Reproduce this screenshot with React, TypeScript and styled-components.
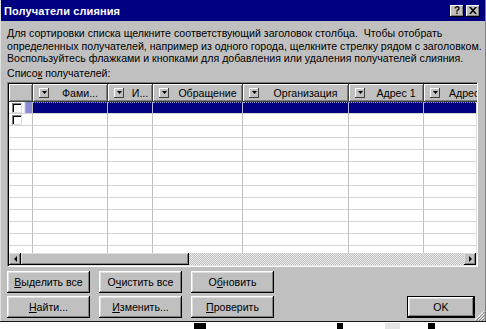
import React from "react";
import styled, { createGlobalStyle } from "styled-components";

const GlobalStyle = createGlobalStyle`
	html, body {
		margin: 0;
		padding: 0;
		background: #ffffff;
	}
	body {
		font-family: "Liberation Sans", Arial, sans-serif;
		font-size: 11px;
		color: #000;
	}
`;

const columns = [
	{ title: "", width: 24 },
	{ title: "Фами...", width: 75 },
	{ title: "И...", width: 45 },
	{ title: "Обращение", width: 90 },
	{ title: "Организация", width: 106 },
	{ title: "Адрес 1", width: 75 },
	{ title: "Адрес 2", width: 70 },
];

const gridTemplate = columns.map((c) => `${c.width}px`).join(" ");
const rowCount = 13;

export default function App() {
	return (
		<>
			<GlobalStyle />
			<Dialog>
				<TitleBar>
					<Title>Получатели слияния</Title>
					<TitleButton>?</TitleButton>
					<TitleButton>
						<svg width="8" height="7" viewBox="0 0 8 7">
							<path d="M0 0h2l2 2.2L6 0h2L5 3.5 8 7H6L4 4.8 2 7H0l3-3.5z" fill="#000" />
						</svg>
					</TitleButton>
				</TitleBar>
				<Body>
					<Description>
						Для сортировки списка щелкните соответствующий заголовок столбца.&nbsp; Чтобы отобрать
						<br />
						определенных получателей, например из одного города, щелкните стрелку рядом с заголовком.
						<br />
						Воспользуйтесь флажками и кнопками для добавления или удаления получателей слияния.
					</Description>
					<Label>
						Списо<u>к</u> получателей:
					</Label>
					<Grid>
						<HeaderRow>
							{columns.map((c, i) => (
								<HeaderCell key={i}>
									{i > 0 && (
										<DropButton>
											<svg width="5" height="3" viewBox="0 0 5 3">
												<path d="M0 0h5L2.5 3z" fill="#000" />
											</svg>
										</DropButton>
									)}
									<HeaderText>{c.title}</HeaderText>
								</HeaderCell>
							))}
						</HeaderRow>
						<Rows>
							{Array.from({ length: rowCount }).map((_, r) => (
								<Row key={r}>
									{columns.map((_, i) =>
										i === 0 ? (
											<SelectorCell key={i} $selected={r === 0}>
												{r < 2 && <Check />}
											</SelectorCell>
										) : (
											<Cell key={i} $selected={r === 0} />
										)
									)}
								</Row>
							))}
						</Rows>
						<ScrollBar>
							<ArrowButton>
								<svg width="3" height="6" viewBox="0 0 3 6">
									<path d="M3 0v6L0 3z" fill="#000" />
								</svg>
							</ArrowButton>
							<Thumb />
							<Track />
							<ArrowButton>
								<svg width="3" height="6" viewBox="0 0 3 6">
									<path d="M0 0v6l3-3z" fill="#000" />
								</svg>
							</ArrowButton>
						</ScrollBar>
					</Grid>
					<Footer>
						<ButtonGrid>
							<Button>
								<u>В</u>ыделить все
							</Button>
							<Button>
								О<u>ч</u>истить все
							</Button>
							<Button>
								О<u>б</u>новить
							</Button>
							<Button>
								<u>Н</u>айти...
							</Button>
							<Button>
								<u>И</u>зменить...
							</Button>
							<Button>
								<u>П</u>роверить
							</Button>
						</ButtonGrid>
						<Button $default>OK</Button>
					</Footer>
				</Body>
				<Grip>
					<svg width="11" height="11" viewBox="0 0 11 11">
						<path d="M10 1L1 10M10 4L4 10M10 7L7 10" stroke="#fff" strokeWidth="1" />
						<path d="M11 2L2 11M11 5L5 11M11 8L8 11" stroke="#808080" strokeWidth="1" />
					</svg>
				</Grip>
			</Dialog>
			<Strip>
				<Mark $left={194} $width={12} />
				<Mark $left={131} $width={6} />
				<Smudge $left={42} $width={15} />
				<Mark $left={28} $width={7} />
			</Strip>
		</>
	);
}

const Dialog = styled.div`
	position: relative;
	width: 486px;
	height: 321px;
	box-sizing: border-box;
	background: #c0c0c0;
	border-left: 1px solid #dfdfdf;
	border-right: 1px solid #808080;
	display: flex;
	flex-direction: column;
`;

const TitleBar = styled.div`
	height: 21px;
	background: #000080;
	display: flex;
	align-items: center;
	gap: 2px;
	padding: 0 5px 0 3px;
`;

const Title = styled.div`
	flex: 1;
	color: #fff;
	font-weight: bold;
	font-size: 11px;
	letter-spacing: 0.1px;
`;

const TitleButton = styled.div`
	width: 14px;
	height: 12px;
	box-sizing: border-box;
	background: #c0c0c0;
	box-shadow: inset -1px -1px #000, inset 1px 1px #fff, inset -2px -2px #808080;
	display: flex;
	align-items: center;
	justify-content: center;
	font-weight: bold;
	font-size: 10px;
	line-height: 1;
`;

const Body = styled.div`
	flex: 1;
	display: flex;
	flex-direction: column;
	padding: 6px 7px 0 6px;
`;

const Description = styled.p`
	margin: 0;
	line-height: 12.5px;
	white-space: nowrap;
	font-size: 10.6px;
`;

const Label = styled.div`
	margin-top: 2px;
	line-height: 12.5px;
	font-size: 10.6px;
`;

const Grid = styled.div`
	margin-top: 3px;
	width: 471px;
	height: 185px;
	box-sizing: border-box;
	border: 1px solid;
	border-color: #808080 #fff #fff #808080;
	box-shadow: inset 1px 1px #000, inset -1px -1px #dfdfdf;
	padding: 1px;
	display: flex;
	flex-direction: column;
	overflow: hidden;
`;

const HeaderRow = styled.div`
	display: grid;
	grid-template-columns: ${gridTemplate};
	height: 18px;
	flex: none;
`;

const HeaderCell = styled.div`
	display: flex;
	align-items: center;
	background: #c0c0c0;
	box-sizing: border-box;
	border-right: 1px solid #404040;
	border-bottom: 1px solid #404040;
	box-shadow: inset 1px 1px #fff, inset -1px -1px #808080;
	padding-left: 6px;
	overflow: hidden;
	white-space: nowrap;
`;

const DropButton = styled.div`
	flex: none;
	width: 10px;
	height: 10px;
	box-sizing: border-box;
	background: #c0c0c0;
	box-shadow: inset -1px -1px #404040, inset 1px 1px #fff;
	display: flex;
	align-items: center;
	justify-content: center;
`;

const HeaderText = styled.span`
	flex: 1;
	text-align: center;
	font-size: 10.6px;
	padding-left: 4px;
	overflow: hidden;
`;

const Rows = styled.div`
	flex: 1;
	background: #fff;
	overflow: hidden;
`;

const Row = styled.div`
	display: grid;
	grid-template-columns: ${gridTemplate};
	height: 12px;
`;

const SelectorCell = styled.div<{ $selected?: boolean }>`
	box-sizing: border-box;
	border-right: 1px solid #c0c0c0;
	border-bottom: 1px solid #d4d4d4;
	background: ${({ $selected }) =>
		$selected ? "linear-gradient(to right, #fff 15px, #8a8ad4 17px)" : "#fff"};
	display: flex;
	align-items: center;
	padding-left: 3px;
`;

const Cell = styled.div<{ $selected?: boolean }>`
	box-sizing: border-box;
	border-right: 1px solid ${({ $selected }) => ($selected ? "#b8b8e0" : "#c0c0c0")};
	border-bottom: 1px solid #d4d4d4;
	background: ${({ $selected }) => ($selected ? "#000080" : "#fff")};
	border-top: ${({ $selected }) => ($selected ? "1px dotted #a0a0d8" : "none")};
`;

const Check = styled.div`
	width: 10px;
	height: 10px;
	box-sizing: border-box;
	background: #fff;
	border: 1px solid;
	border-color: #808080 #dfdfdf #dfdfdf #808080;
	box-shadow: inset 1px 1px #000;
`;

const ScrollBar = styled.div`
	height: 12px;
	flex: none;
	display: flex;
`;

const ArrowButton = styled.div`
	width: 12px;
	height: 12px;
	box-sizing: border-box;
	background: #c0c0c0;
	box-shadow: inset -1px -1px #000, inset 1px 1px #dfdfdf, inset -2px -2px #808080;
	display: flex;
	align-items: center;
	justify-content: center;
`;

const Thumb = styled.div`
	width: 168px;
	height: 12px;
	background: #c0c0c0;
	box-shadow: inset -1px -1px #000, inset 1px 1px #dfdfdf, inset -2px -2px #808080;
`;

const Track = styled.div`
	flex: 1;
	background: repeating-conic-gradient(#c0c0c0 0 25%, #ececec 0 50%) 0 0 / 2px 2px;
`;

const Footer = styled.div`
	margin-top: 4px;
	display: flex;
	align-items: flex-end;
	justify-content: space-between;
	padding-right: 3px;
`;

const ButtonGrid = styled.div`
	display: grid;
	grid-template-columns: repeat(3, 83px);
	column-gap: 9px;
	row-gap: 3px;
`;

const Button = styled.div<{ $default?: boolean }>`
	width: ${({ $default }) => ($default ? "68px" : "83px")};
	height: 22px;
	box-sizing: border-box;
	background: #c0c0c0;
	display: flex;
	align-items: center;
	justify-content: center;
	font-size: 10.6px;
	border: ${({ $default }) => ($default ? "1px solid #000" : "none")};
	box-shadow: inset -1px -1px #000, inset 1px 1px #fff, inset -2px -2px #808080,
		inset 2px 2px #dfdfdf;
`;

const Grip = styled.div`
	position: absolute;
	right: 0;
	bottom: 0;
	width: 11px;
	height: 11px;
`;

const Strip = styled.div`
	height: 8px;
	border-top: 1px solid #1a1a1a;
	background: #fff;
	display: flex;
`;

const Mark = styled.div<{ $left: number; $width: number }>`
	margin-left: ${({ $left }) => $left}px;
	width: ${({ $width }) => $width}px;
	margin-top: 1px;
	background: #000;
`;

const Smudge = styled(Mark)`
	background: #e4e4e4;
`;
